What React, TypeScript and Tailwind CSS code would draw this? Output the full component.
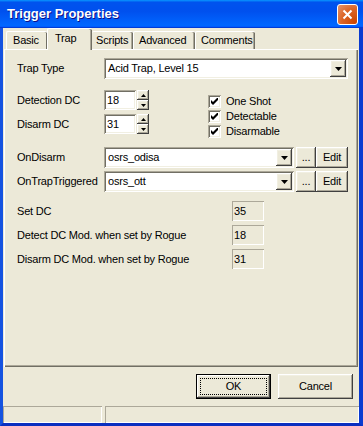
import React from "react";

const raised =
  "shadow-[inset_-1px_-1px_#404040,inset_1px_1px_#ffffff,inset_-2px_-2px_#aca899,inset_2px_2px_#f1efe2]";
const sunken =
  "shadow-[inset_1px_1px_#aca899,inset_-1px_-1px_#ffffff,inset_2px_2px_#716f64,inset_-2px_-2px_#f1efe2]";
const thinSunken = "shadow-[inset_1px_1px_#aca899,inset_-1px_-1px_#ffffff]";

function DownArrow() {
  return (
    <svg width="7" height="4" viewBox="0 0 7 4">
      <path d="M0 0h7L3.5 4z" fill="#000" />
    </svg>
  );
}

function Combo({ value, width }: { value: string; width: string }) {
  return (
    <div className={`flex h-[21px] items-stretch bg-white p-[2px] ${sunken} ${width}`}>
      <div className="flex flex-1 items-center pl-[2px]">{value}</div>
      <div className={`flex w-[16px] items-center justify-center bg-[#ece9d8] ${raised}`}>
        <DownArrow />
      </div>
    </div>
  );
}

function Spin({ value }: { value: string }) {
  return (
    <div className="flex h-[20px] items-stretch gap-[1px]">
      <div className={`flex w-[32px] items-center bg-white pl-[3px] ${sunken}`}>{value}</div>
      <div className="flex w-[12px] flex-col">
        <div className={`flex flex-1 items-center justify-center bg-[#ece9d8] ${raised}`}>
          <svg width="5" height="3" viewBox="0 0 5 3">
            <path d="M2.5 0L5 3H0z" fill="#000" />
          </svg>
        </div>
        <div className={`flex flex-1 items-center justify-center bg-[#ece9d8] ${raised}`}>
          <svg width="5" height="3" viewBox="0 0 5 3">
            <path d="M0 0h5L2.5 3z" fill="#000" />
          </svg>
        </div>
      </div>
    </div>
  );
}

function Check({ label }: { label: string }) {
  return (
    <div className="flex h-[15px] items-center gap-[5px]">
      <div className={`flex h-[13px] w-[13px] items-center justify-center bg-white ${sunken}`}>
        <svg width="7" height="7" viewBox="0 0 7 7">
          <path d="M0 2v3l2 2 5-5V-1L2 4z" fill="#000" />
        </svg>
      </div>
      <span>{label}</span>
    </div>
  );
}

function ReadOnly({ label, value }: { label: string; value: string }) {
  return (
    <div className="flex h-[20px] items-center">
      <div className="w-[215px]">{label}</div>
      <div className={`flex h-[20px] w-[32px] items-center pl-[2px] ${thinSunken}`}>{value}</div>
    </div>
  );
}

export default function App() {
  return (
    <div
      className="flex h-[426px] w-[363px] flex-col bg-[#0831d9] text-[11px] tracking-[-0.2px] text-black"
      style={{ fontFamily: '"Liberation Sans", Arial, sans-serif' }}
    >
      {/* title bar */}
      <div className="flex h-[28px] items-center justify-between bg-[linear-gradient(180deg,#0997ff,#0053ee_8%,#0050ee_40%,#0066ff_88%,#0066ff_93%,#005bff_95%,#003dd7_96%,#003dd7)] pl-[7px] pr-[5px]">
        <span className="text-[13px] font-bold tracking-normal text-white [text-shadow:1px_1px_#0f1089]">
          Trigger Properties
        </span>
        <div className="flex h-[21px] w-[21px] items-center justify-center rounded-[3px] border border-white bg-[radial-gradient(circle_at_90%_90%,#cc4600,#dc6527_55%,#e58b5e_90%)]">
          <svg width="11" height="11" viewBox="0 0 11 11">
            <path d="M1.5 1.5l8 8M9.5 1.5l-8 8" stroke="#fff" strokeWidth="2" />
          </svg>
        </div>
      </div>

      <div className="flex flex-1 flex-col border-b-[3px] border-l-[3px] border-r-[4px] border-b-[#0a2fc0] border-l-[#1553e0] border-r-[#0a3bd0] bg-[#ece9d8]">
        {/* tabs */}
        <div className="flex h-[21px] items-end pl-[3px]">
          <div className="flex h-[18px] w-[41px] items-center rounded-t-[2px] border-l border-t border-white pl-[6px] shadow-[inset_-1px_0_#716f64]">
            Basic
          </div>
          <div className="relative z-10 -mb-px flex h-[22px] w-[45px] items-center rounded-t-[2px] border-l border-t border-white pl-[7px] pb-[2px] shadow-[inset_-1px_0_#716f64,inset_-2px_0_#aca899] bg-[#ece9d8]">
            Trap
          </div>
          <div className="flex h-[18px] w-[41px] items-center rounded-t-[2px] border-t border-white pl-[4px] shadow-[inset_-1px_0_#716f64,inset_-2px_0_#aca899]">
            Scripts
          </div>
          <div className="flex h-[18px] w-[62px] items-center rounded-t-[2px] border-l border-t border-white pl-[5px] shadow-[inset_-1px_0_#716f64,inset_-2px_0_#aca899]">
            Advanced
          </div>
          <div className="flex h-[18px] w-[60px] items-center rounded-t-[2px] border-l border-t border-white pl-[5px] shadow-[inset_-1px_0_#716f64,inset_-2px_0_#aca899]">
            Comments
          </div>
        </div>

        {/* tab page */}
        <div className="mx-[1px] flex h-[318px] flex-col border-l border-t border-white pl-[12px] shadow-[inset_-1px_-1px_#716f64,inset_-2px_-2px_#aca899]">
          <div className="mt-[8px] flex items-center">
            <div className="w-[87px]">Trap Type</div>
            <Combo value="Acid Trap, Level 15" width="w-[244px]" />
          </div>

          <div className="mt-[11px] flex h-[44px]">
            <div className="flex flex-col gap-[4px]">
              <div className="flex items-center">
                <div className="w-[87px]">Detection DC</div>
                <Spin value="18" />
              </div>
              <div className="flex items-center">
                <div className="w-[87px]">Disarm DC</div>
                <Spin value="31" />
              </div>
            </div>
            <div className="ml-[59px] mt-[4px] flex flex-col">
              <Check label="One Shot" />
              <Check label="Detectable" />
              <Check label="Disarmable" />
            </div>
          </div>

          <div className="mt-[13px] flex flex-col gap-[3px]">
            <div className="flex items-center">
              <div className="w-[87px]">OnDisarm</div>
              <Combo value="osrs_odisa" width="w-[190px]" />
              <div className={`ml-[2px] flex h-[21px] w-[20px] items-center justify-center bg-[#ece9d8] ${raised}`}>...</div>
              <div className={`flex h-[21px] w-[32px] items-center justify-center bg-[#ece9d8] ${raised}`}>Edit</div>
            </div>
            <div className="flex items-center">
              <div className="w-[87px]">OnTrapTriggered</div>
              <Combo value="osrs_ott" width="w-[190px]" />
              <div className={`ml-[2px] flex h-[21px] w-[20px] items-center justify-center bg-[#ece9d8] ${raised}`}>...</div>
              <div className={`flex h-[21px] w-[32px] items-center justify-center bg-[#ece9d8] ${raised}`}>Edit</div>
            </div>
          </div>

          <div className="mt-[9px] flex flex-col gap-[4px]">
            <ReadOnly label="Set DC" value="35" />
            <ReadOnly label="Detect DC Mod. when set by Rogue" value="18" />
            <ReadOnly label="Disarm DC Mod. when set by Rogue" value="31" />
          </div>
        </div>

        {/* buttons */}
        <div className="flex flex-1 items-center justify-end gap-[7px] pr-[6px]">
          <div className="flex h-[25px] w-[75px] border border-black">
            <div className={`flex flex-1 p-[3px] ${raised}`}>
              <div className="flex flex-1 items-center justify-center border border-dotted border-black">
                OK
              </div>
            </div>
          </div>
          <div className={`flex h-[25px] w-[75px] items-center justify-center ${raised}`}>Cancel</div>
        </div>

        {/* status bar */}
        <div className="flex h-[17px] gap-[3px]">
          <div className={`w-[99px] ${thinSunken}`} />
          <div className={`flex-1 ${thinSunken}`} />
        </div>
      </div>
    </div>
  );
}
